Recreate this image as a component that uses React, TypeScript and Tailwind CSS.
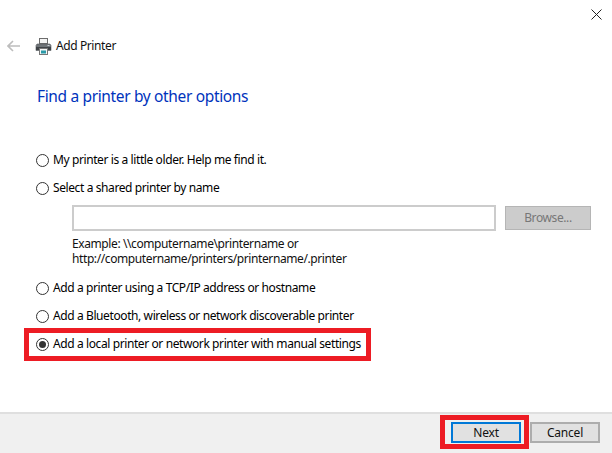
const font = { fontFamily: '"Noto Sans", sans-serif' };

function PrinterIcon() {
  return (
    <svg width="17" height="17" viewBox="0 0 17 17" className="shrink-0">
      <rect x="4.5" y="0.5" width="8" height="5" fill="#f4f4f4" stroke="#6d6d6d" />
      <path d="M2 6h13l1 1.5V12.5h-15V7.5z" fill="#6f7478" stroke="#54585c" strokeWidth="0.6" />
      <rect x="1" y="9" width="15" height="3" fill="#3f4347" />
      <rect x="12.5" y="7" width="2" height="1" fill="#c9ced2" />
      <rect x="4.5" y="10.5" width="8" height="6" fill="#f6f6f6" stroke="#777" />
      <rect x="6" y="12.5" width="5" height="3" fill="#2a9aa8" />
    </svg>
  );
}

function Radio({ label, checked }: { label: string; checked?: boolean }) {
  return (
    <div className="flex items-center h-4 text-[12px] text-[#000]">
      <span className="w-[13px] h-[13px] rounded-full border border-[#333] flex items-center justify-center shrink-0 bg-white">
        {checked && <span className="w-[7px] h-[7px] rounded-full bg-[#333]" />}
      </span>
      <span className="ml-[4px] whitespace-nowrap tracking-[-0.4px]">{label}</span>
    </div>
  );
}

export default function App() {
  return (
    <div className="w-[612px] h-[453px] bg-white flex flex-col relative overflow-hidden" style={font}>
      <div className="flex justify-end h-[38px] pt-[9px] pr-[10px]">
        <svg width="11" height="11" viewBox="0 0 11 11">
          <path d="M0.5 0.5L10.5 10.5M10.5 0.5L0.5 10.5" stroke="#222" strokeWidth="1" />
        </svg>
      </div>

      <div className="flex items-center h-[16px] pl-[7px]">
        <svg width="13" height="12" viewBox="0 0 13 12" className="shrink-0">
          <path d="M6 1L1 6L6 11M1 6H13" fill="none" stroke="#bdbdbd" strokeWidth="1.6" />
        </svg>
        <span className="ml-[15px]"><PrinterIcon /></span>
        <span className="ml-[4px] text-[12px] text-[#111] tracking-[-0.4px]">Add Printer</span>
      </div>

      <div className="pl-[37px] mt-[31px] text-[15.5px] leading-[22px] text-[#0033bc] tracking-[-0.35px]">
        Find a printer by other options
      </div>

      <div className="flex flex-col pl-[36px] mt-[45px]">
        <Radio label="My printer is a little older. Help me find it." />
        <div className="mt-[12px]"><Radio label="Select a shared printer by name" /></div>
        <div className="flex items-start ml-[36px] mt-[9px] gap-[9px]">
          <div className="w-[424px] h-[26px] border-2 border-[#cccccc] bg-white" />
          <div className="w-[86px] h-[24px] mt-px border border-[#b5b5b5] bg-[#cccccc] flex items-center justify-center text-[12px] text-[#777] tracking-[-0.4px]">
            Browse...
          </div>
        </div>
        <div className="ml-[36px] mt-[5px] text-[12px] leading-[15px] text-[#111] tracking-[-0.4px]">
          <div>Example: \\computername\printername or</div>
          <div>http://computername/printers/printername/.printer</div>
        </div>
        <div className="mt-[14px]"><Radio label="Add a printer using a TCP/IP address or hostname" /></div>
        <div className="mt-[12px]"><Radio label="Add a Bluetooth, wireless or network discoverable printer" /></div>
        <div className="mt-[12px] relative">
          <Radio checked label="Add a local printer or network printer with manual settings" />
          <div className="absolute left-[-12px] top-[-8px] w-[347px] h-[33px] border-[5px] border-[#ed1c24]" />
        </div>
      </div>

      <div className="mt-auto h-[41px] bg-[#f0f0f0] border-t-2 border-[#dfdfdf] flex justify-end items-start pt-[8px] pr-[12px] gap-[9px] text-[12px] text-[#111] tracking-[-0.2px]">
        <div className="relative">
          <div className="w-[70px] h-[21px] border-2 border-[#0078d7] bg-[#e1e1e1] flex items-center justify-center">Next</div>
          <div className="absolute left-[-11px] top-[-7px] w-[89px] h-[34px] border-[5px] border-[#ed1c24]" />
        </div>
        <div className="w-[70px] h-[21px] border-2 border-[#adadad] bg-[#e1e1e1] flex items-center justify-center">Cancel</div>
      </div>
    </div>
  );
}
